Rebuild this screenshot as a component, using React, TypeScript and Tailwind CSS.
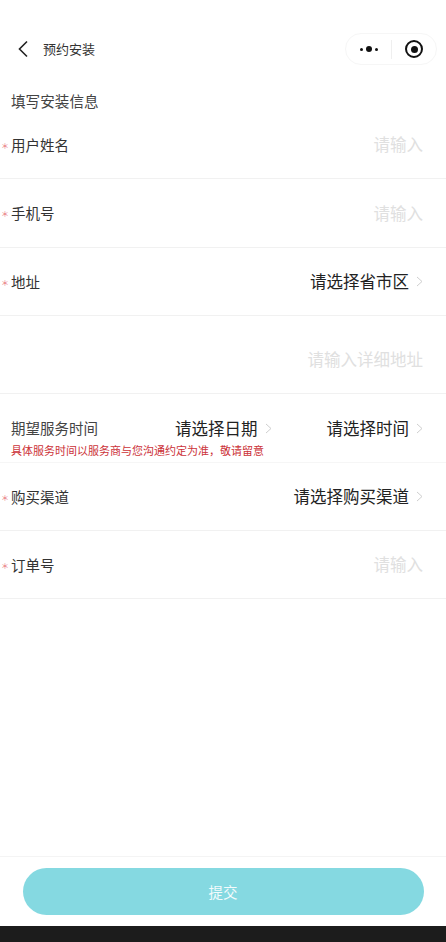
import React from 'react';

const font = { fontFamily: '"Noto Sans CJK SC", "Liberation Sans", sans-serif' };

function Arrow() {
  return (
    <svg width="7" height="11" viewBox="0 0 7 11" className="ml-[7px] shrink-0" fill="none">
      <path d="M1 1 6 5.5 1 10" stroke="#cfcfcf" strokeWidth="1" />
    </svg>
  );
}

function Row({ label, required, children, className = 'h-[68px]' }: { label?: string; required?: boolean; children: React.ReactNode; className?: string }) {
  return (
    <div className={`flex items-center justify-between border-b border-[#f1f1f1] pl-[11px] pr-[23px] ${className}`}>
      {label ? (
        <div className="relative text-[14.5px] leading-[28px] text-[#333]">
          {required && <span className="absolute left-[-10px] top-[1px] text-[8px] leading-[28px] text-[#e8767c]">＊</span>}
          {label}
        </div>
      ) : <div />}
      {children}
    </div>
  );
}

function Placeholder({ text }: { text: string }) {
  return <span className="text-[16.5px] text-[#e0e0e0]">{text}</span>;
}

function Select({ text }: { text: string }) {
  return (
    <span className="flex items-center text-[16.5px] text-[#222]">
      {text}
      <Arrow />
    </span>
  );
}

export default function App() {
  return (
    <div className="flex h-[942px] w-[446px] flex-col overflow-hidden bg-white" style={font}>
      <header className="shrink-0 pt-[33px]">
        <div className="flex h-[32px] items-center justify-between pl-[17px] pr-[9px]">
          <div className="flex items-center">
            <svg width="12" height="18" viewBox="0 0 12 18" fill="none">
              <path d="M10 1.5 2.5 9l7.5 7.5" stroke="#222" strokeWidth="1.6" />
            </svg>
            <span className="ml-[14px] text-[13px] text-[#333]">预约安装</span>
          </div>
          <div className="flex h-[32px] w-[92px] items-center rounded-full border border-[#f6f6f6]">
            <div className="flex w-[45px] items-center justify-center gap-[3px]">
              <span className="h-[3px] w-[3px] rounded-full bg-[#111]" />
              <span className="h-[6px] w-[6px] rounded-full bg-[#111]" />
              <span className="h-[3px] w-[3px] rounded-full bg-[#111]" />
            </div>
            <span className="h-[19px] w-px bg-[#efefef]" />
            <div className="flex flex-1 items-center justify-center">
              <span className="flex h-[18px] w-[18px] items-center justify-center rounded-full border-2 border-[#111]">
                <span className="h-[7px] w-[7px] rounded-full bg-[#111]" />
              </span>
            </div>
          </div>
        </div>
        <h1 className="mt-[26px] pl-[11px] text-[14.6px] leading-[20px] text-[#444]">填写安装信息</h1>
      </header>

      <Row label="用户姓名" required><Placeholder text="请输入" /></Row>
      <Row label="手机号" required className="h-[69px]"><Placeholder text="请输入" /></Row>
      <Row label="地址" required><Select text="请选择省市区" /></Row>
      <Row className="h-[78px] pt-[10px]"><Placeholder text="请输入详细地址" /></Row>

      <div className="flex h-[69px] flex-col border-b border-[#f6f6f6] pl-[11px] pr-[23px] pt-[18px]">
        <div className="flex h-[32px] items-center">
          <span className="w-[164px] text-[14.5px] text-[#444]">期望服务时间</span>
          <Select text="请选择日期" />
          <span className="ml-auto"><Select text="请选择时间" /></span>
        </div>
        <p className="text-[11px] leading-[13px] text-[#cc3238]">具体服务时间以服务商与您沟通约定为准，敬请留意</p>
      </div>

      <Row label="购买渠道" required><Select text="请选择购买渠道" /></Row>
      <Row label="订单号" required><Placeholder text="请输入" /></Row>

      <div className="flex-1" />

      <div className="flex h-[70px] shrink-0 items-start justify-center border-t border-[#f4f4f4] pt-[11px]">
        <button className="h-[47px] w-[401px] rounded-full bg-[#85d9e1] text-[14.5px] text-[#f4fbfc]">提交</button>
      </div>
      <div className="h-[16px] shrink-0 bg-[#1c1c1c]" />
    </div>
  );
}
